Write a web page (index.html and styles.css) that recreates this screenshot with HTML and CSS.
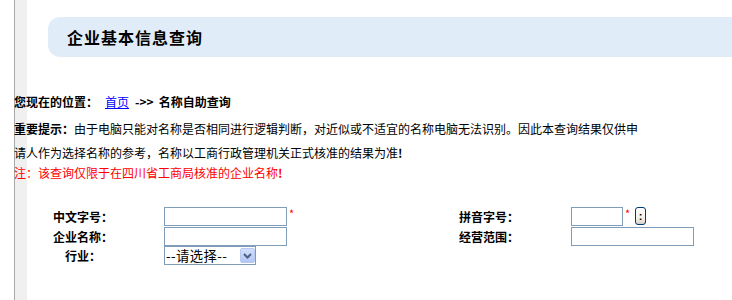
FILE: index.html
```html
<!DOCTYPE html>
<html lang="zh-CN">
<head>
<meta charset="utf-8">
<title>企业基本信息查询</title>
<link rel="stylesheet" href="styles.css">
</head>
<body>
<div class="page">
  <div class="titlebar"><h1 class="title">企业基本信息查询</h1></div>

  <div class="crumb"><b>您现在的位置：</b><a class="crumb-link" href="#">首页</a><b class="crumb-arrow">-&gt;&gt;</b><b class="crumb-cur">名称自助查询</b></div>

  <div class="notice">
    <div class="notice-line"><b>重要提示：</b><span>由于电脑只能对名称是否相同进行逻辑判断，对近似或不适宜的名称电脑无法识别。因此本查询结果仅供申</span></div>
    <div class="notice-line"><span>请人作为选择名称的参考，名称以工商行政管理机关正式核准的结果为准</span><b>!</b></div>
  </div>
  <div class="warn"><span>注：该查询仅限于在四川省工商局核准的企业名称</span><b>!</b></div>

  <form class="form">
    <label class="lbl lbl-left">中文字号：</label>
    <div class="field"><input class="inp inp-wide" type="text"><span class="req">*</span></div>
    <label class="lbl lbl-right">拼音字号：</label>
    <div class="field"><input class="inp inp-short" type="text"><span class="req">*</span><button class="btn-colon" type="button">:</button></div>

    <label class="lbl lbl-left">企业名称：</label>
    <div class="field"><input class="inp inp-wide" type="text"></div>
    <label class="lbl lbl-right">经营范围：</label>
    <div class="field"><input class="inp inp-wide" type="text"></div>

    <label class="lbl lbl-left">行业：</label>
    <div class="field">
      <span class="sel-wrap">
        <select class="sel"><option>--请选择--</option></select>
        <span class="sel-btn"><svg width="9" height="6" viewBox="0 0 9 6"><path d="M1 1 L4.5 4.5 L8 1" fill="none" stroke="#4d6185" stroke-width="2"/></svg></span>
      </span>
    </div>
  </form>
</div>
</body>
</html>
```

FILE: styles.css
```css
html, body {
  margin: 0;
  padding: 0;
}
body {
  width: 732px;
  height: 300px;
  overflow: hidden;
  font-family: "Noto Sans CJK SC", "Noto Sans", sans-serif;
  font-size: 12px;
  color: #000;
  background: linear-gradient(to right, #fff 0 14px, #a8a8a8 14px 15px, #f0f0f0 15px 27px, #fff 27px);
}
.page {
  padding: 17px 0 0 14px;
}
.titlebar {
  margin-left: 34px;
  height: 40px;
  border-radius: 12px 0 0 12px;
  background: #e0ecf7;
  display: flex;
  align-items: center;
  padding-left: 19px;
}
.title {
  margin: 0;
  font-size: 16px;
  font-weight: bold;
  letter-spacing: 1px;
  line-height: 20px;
}
.crumb {
  margin-top: 35px;
  line-height: 20px;
  font-size: 12px;
}
.crumb-link {
  color: #0000ff;
  text-decoration: underline;
  margin-left: 7px;
}
.crumb-arrow {
  margin-left: 6px;
}
.crumb-cur {
  margin-left: 5px;
}
.notice {
  margin-top: 5px;
}
.notice-line {
  line-height: 24px;
  white-space: nowrap;
}
.warn {
  color: #ff0000;
  line-height: 16px;
}
.form {
  margin-top: 26px;
  display: grid;
  grid-template-columns: 150px 256px 151px auto;
  grid-template-rows: 20px 19px 19px;
  align-items: center;
}
.lbl {
  font-weight: bold;
  text-align: center;
  line-height: 16px;
}
.lbl-left {
  padding-right: 12px;
}
.lbl-right {
  padding-right: 13px;
}
.field {
  align-self: start;
  display: flex;
  align-items: flex-start;
  height: 19px;
}
.inp {
  box-sizing: border-box;
  height: 19px;
  border: 1px solid #7f9db9;
  padding: 0 2px;
  margin: 0;
  font-size: 12px;
  background: #fff;
}
.inp-wide {
  width: 123px;
}
.inp-short {
  width: 52px;
}
.req {
  color: #ff0000;
  font-size: 11px;
  line-height: 12px;
  margin-left: 2px;
}
.btn-colon {
  box-sizing: border-box;
  margin: 0 0 0 5px;
  padding: 0;
  width: 11px;
  height: 18px;
  border: 1px solid #003c74;
  border-radius: 3px;
  background: linear-gradient(#ffffff, #f0efe6 70%, #d6d0c5);
  font-family: "Liberation Sans", sans-serif;
  font-weight: bold;
  font-size: 11px;
  line-height: 14px;
  color: #000;
}
.sel-wrap {
  position: relative;
  display: inline-block;
  width: 92px;
  height: 19px;
}
.sel {
  -webkit-appearance: none;
  appearance: none;
  box-sizing: border-box;
  width: 92px;
  height: 19px;
  margin: 0;
  border: 1px solid #7f9db9;
  border-radius: 0;
  padding: 0 0 0 1px;
  background: #fff;
  font-family: "Noto Sans CJK SC", sans-serif;
  font-size: 13.33px;
  line-height: 17px;
  color: #000;
  letter-spacing: 0.4px;
}
.sel-btn {
  position: absolute;
  top: 2px;
  right: 1px;
  width: 15px;
  height: 15px;
  box-sizing: border-box;
  border: 1px solid #b6c9f2;
  border-radius: 2px;
  background: linear-gradient(#d2defb, #b4c7f4);
  display: flex;
  align-items: center;
  justify-content: center;
  pointer-events: none;
}
```
